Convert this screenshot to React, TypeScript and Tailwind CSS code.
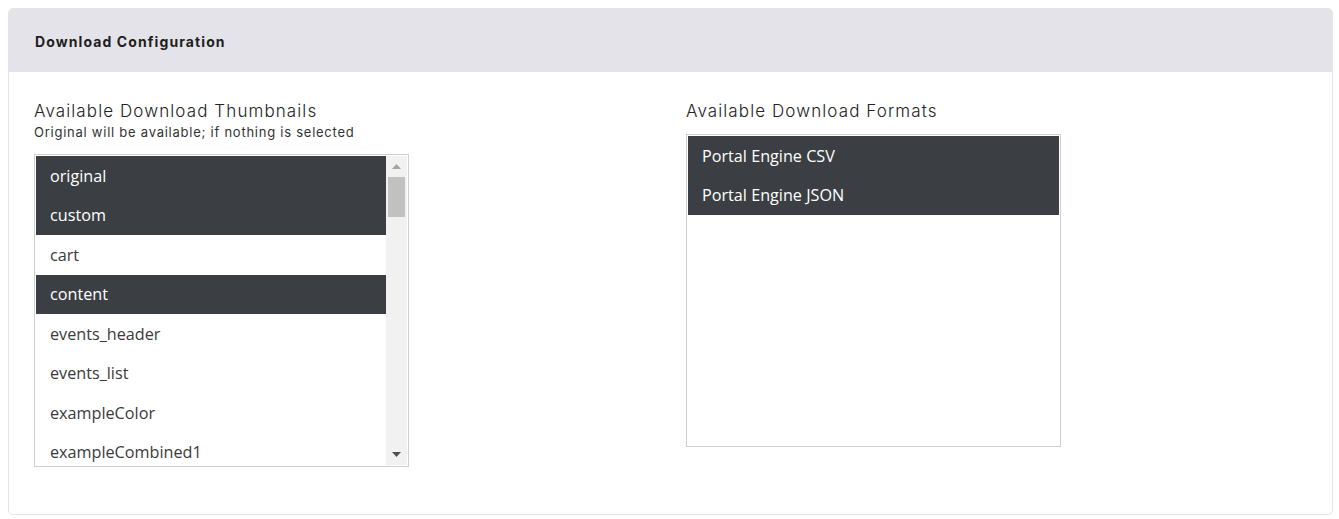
import React from "react"

const thumbnails = [
  { name: "original", selected: true },
  { name: "custom", selected: true },
  { name: "cart", selected: false },
  { name: "content", selected: true },
  { name: "events_header", selected: false },
  { name: "events_list", selected: false },
  { name: "exampleColor", selected: false },
  { name: "exampleCombined1", selected: false },
]

const formats = [
  { name: "Portal Engine CSV", selected: true },
  { name: "Portal Engine JSON", selected: true },
]

const heading = "font-['Inter',sans-serif]"
const body = "font-['Open_Sans',sans-serif]"

function Option({ name, selected }: { name: string; selected: boolean }) {
  return (
    <div
      className={`h-[39.5px] shrink-0 flex items-center pl-[14px] text-[16.2px] ${body} ${
        selected ? "bg-[#3b3f43] text-white" : "bg-white text-[#3a3a3a]"
      }`}
    >
      {name}
    </div>
  )
}

// fake native scrollbar for the thumbnails list
function ScrollBar() {
  return (
    <div className="w-[21px] shrink-0 bg-[#f1f1f1] flex flex-col items-center">
      <div className="h-[21px] flex items-center justify-center">
        <svg width="9" height="5" viewBox="0 0 9 5">
          <path d="M4.5 0L9 5H0z" fill="#a3a3a3" />
        </svg>
      </div>
      <div className="w-[17px] h-[40px] bg-[#c1c1c1]" />
      <div className="flex-1" />
      <div className="h-[21px] flex items-center justify-center">
        <svg width="9" height="5" viewBox="0 0 9 5">
          <path d="M0 0H9L4.5 5z" fill="#505050" />
        </svg>
      </div>
    </div>
  )
}

export default function App() {
  return (
    <div className="w-[1339px] h-[519px] bg-white pt-2 pl-2 pr-[6px]">
      <div className="h-[507px] rounded-[5px] border border-[#e4e3ea] overflow-hidden flex flex-col">
        {/* Header */}
        <div className="h-[64px] bg-[#e4e3e9] flex items-center pl-[26px] pt-[3px] -mt-px -mx-px">
          <h1 className={`${heading} text-[14px] font-bold tracking-[1.1px] text-[#1e1e1e] pl-px`}>
            Download Configuration
          </h1>
        </div>

        <div className="grid grid-cols-[652px_1fr] pl-[25px] pt-[28px]">
          <div>
            <h2 className={`${heading} text-[17px] font-light tracking-[1.1px] text-[#222] leading-[22px]`}>
              Available Download Thumbnails
            </h2>
            <p className={`${heading} text-[13px] tracking-[0.75px] text-[#333] leading-[20px] mb-[12px]`}>
              Original will be available; if nothing is selected
            </p>
            <div className="w-[375px] h-[313px] border border-[#cfcfcf] p-px flex overflow-hidden">
              <div className="flex-1 flex flex-col overflow-hidden">
                {thumbnails.map((t) => (
                  <Option key={t.name} {...t} />
                ))}
              </div>
              <ScrollBar />
            </div>
          </div>

          <div>
            <h2 className={`${heading} text-[17px] font-light tracking-[1.1px] text-[#222] leading-[22px] mb-[12px]`}>
              Available Download Formats
            </h2>
            <div className="w-[375px] h-[313px] border border-[#cfcfcf] p-px flex flex-col">
              {formats.map((f) => (
                <Option key={f.name} {...f} />
              ))}
            </div>
          </div>
        </div>
      </div>
    </div>
  )
}
